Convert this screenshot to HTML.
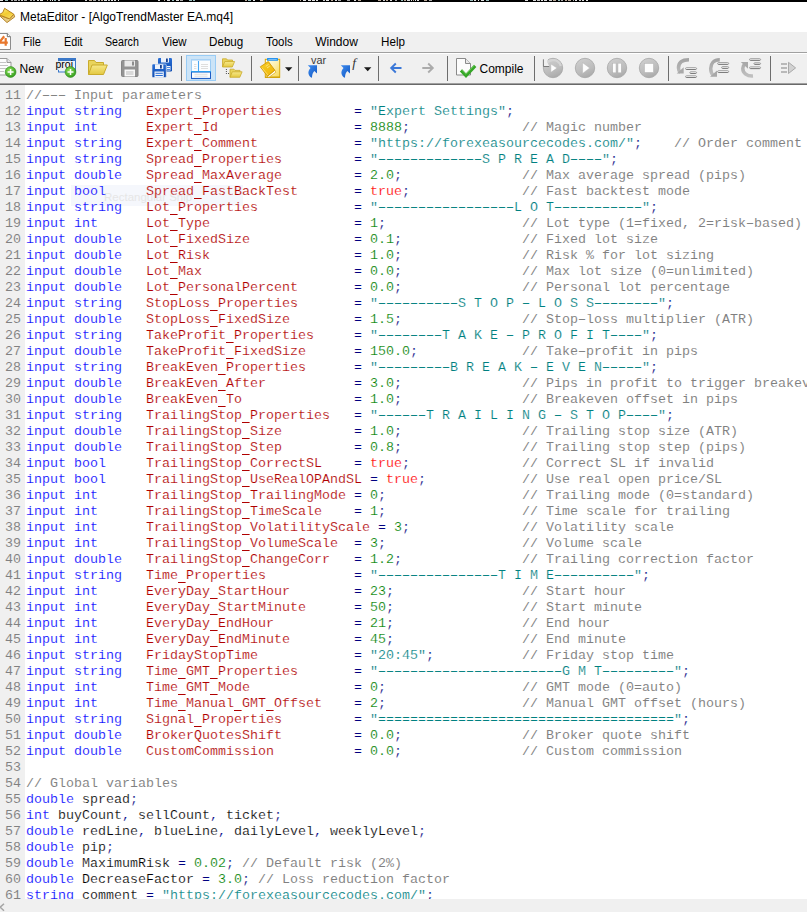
<!DOCTYPE html>
<html><head><meta charset="utf-8">
<style>
html,body{margin:0;padding:0;}
body{width:807px;height:912px;overflow:hidden;background:#fff;font-family:"Liberation Sans",sans-serif;position:relative;}
#top{position:absolute;left:0;top:0;width:807px;height:2px;background:#000;}
#top i{position:absolute;top:0;height:1px;}
#title{position:absolute;left:0;top:2px;width:807px;height:30px;background:#fff;}
#title .txt{position:absolute;left:20px;top:7px;font-size:12px;line-height:16px;color:#000;white-space:nowrap;}
#menu{position:absolute;left:0;top:32px;width:807px;height:20px;background:#f0f0f0;}
#menu span{position:absolute;transform-origin:0 0;top:2px;font-size:12px;line-height:16px;color:#000;white-space:nowrap;}
#msep1{position:absolute;left:0;top:52px;width:807px;height:1px;background:#a0a0a0;}
#msep2{position:absolute;left:0;top:53px;width:807px;height:1px;background:#fff;}
#tb{position:absolute;left:0;top:54px;width:807px;height:29px;background:#f0f0f0;}
#tbb1{position:absolute;left:0;top:83px;width:807px;height:1px;background:#a0a0a0;}
#tbb2{position:absolute;left:0;top:84px;width:807px;height:1px;background:#696969;}
#code{position:absolute;left:0;top:85px;width:807px;height:814px;background:#fff;overflow:hidden;}
#gutter{position:absolute;left:0;top:0;width:25px;height:814px;background:#f0f0f0;}
#ghost{position:absolute;left:71px;top:100px;width:172px;height:21px;background:#f5f7fc;}
#ghost span{position:absolute;left:33px;top:4px;font-size:11.5px;line-height:16px;color:#e6e6e6;white-space:nowrap;}
#lines{position:absolute;left:26px;top:3px;font-family:"Liberation Mono",monospace;font-size:13.333px;line-height:16px;color:#000;white-space:pre;-webkit-text-stroke:0.18px #fff;}
.ln{height:16px;position:relative;}
.no{position:absolute;left:-21px;top:0;color:#808080;-webkit-text-stroke:0.06px #f0f0f0;}
u{display:inline-block;width:8px;height:16px;vertical-align:top;text-decoration:none;background:linear-gradient(currentColor,currentColor) no-repeat 0 14px/7.6px 1px;}
#lines b{font-weight:normal;-webkit-text-stroke:0.25px currentColor;}
.b{color:#0000ff;}
.v{color:#b00000;}
.s{color:#008080;}
.n{color:#008000;}
.k{color:#ff0000;}
.c{color:#808080;-webkit-text-stroke:0.06px #fff;}
.o{color:#000080;}
#hs{position:absolute;left:0;top:899px;width:807px;height:13px;background:#f0f0f0;}
</style></head><body>
<div id="top"><i style="left:0px;width:3px;background:#e4e4e4"></i><i style="left:5px;width:3px;background:#9bb"></i><i style="left:11px;width:2px;background:#aaa"></i><i style="left:14px;width:3px;background:#aaa"></i><i style="left:18px;width:2px;background:#aaa"></i><i style="left:21px;width:2px;background:#ccc"></i><i style="left:24px;width:3px;background:#aaa"></i><i style="left:30px;width:2px;background:#aaa"></i><i style="left:33px;width:2px;background:#aaa"></i><i style="left:37px;width:2px;background:#ddd"></i><i style="left:40px;width:3px;background:#e4e4e4"></i><i style="left:47px;width:1px;background:#ba9"></i><i style="left:50px;width:1px;background:#ddd"></i><i style="left:52px;width:1px;background:#e4e4e4"></i><i style="left:54px;width:2px;background:#9bb"></i><i style="left:58px;width:2px;background:#ccc"></i><i style="left:85px;width:2px;background:#ccc"></i><i style="left:89px;width:3px;background:#ba9"></i><i style="left:93px;width:3px;background:#aaa"></i><i style="left:98px;width:2px;background:#aaa"></i><i style="left:101px;width:2px;background:#ba9"></i><i style="left:104px;width:3px;background:#ddd"></i><i style="left:108px;width:2px;background:#ccc"></i><i style="left:111px;width:2px;background:#e4e4e4"></i><i style="left:114px;width:2px;background:#ddd"></i><i style="left:118px;width:1px;background:#e4e4e4"></i><i style="left:158px;width:2px;background:#ddd"></i><i style="left:164px;width:1px;background:#ba9"></i><i style="left:167px;width:3px;background:#ddd"></i><i style="left:172px;width:2px;background:#9bb"></i><i style="left:176px;width:3px;background:#ddd"></i><i style="left:180px;width:3px;background:#aaa"></i><i style="left:189px;width:3px;background:#9bb"></i><i style="left:193px;width:2px;background:#9bb"></i><i style="left:245px;width:2px;background:#ba9"></i><i style="left:248px;width:3px;background:#9bb"></i><i style="left:253px;width:2px;background:#e4e4e4"></i><i style="left:260px;width:3px;background:#ba9"></i><i style="left:300px;width:1px;background:#ba9"></i><i style="left:303px;width:3px;background:#e4e4e4"></i><i style="left:308px;width:3px;background:#e4e4e4"></i><i style="left:312px;width:3px;background:#e4e4e4"></i><i style="left:316px;width:2px;background:#ddd"></i><i style="left:323px;width:2px;background:#ccc"></i><i style="left:326px;width:3px;background:#e4e4e4"></i><i style="left:331px;width:2px;background:#ba9"></i><i style="left:335px;width:2px;background:#ddd"></i><i style="left:338px;width:3px;background:#aaa"></i><i style="left:347px;width:3px;background:#aaa"></i><i style="left:354px;width:2px;background:#ddd"></i><i style="left:358px;width:3px;background:#ba9"></i><i style="left:378px;width:3px;background:#ba9"></i><i style="left:383px;width:2px;background:#ccc"></i><i style="left:386px;width:2px;background:#ba9"></i><i style="left:390px;width:2px;background:#ddd"></i><i style="left:395px;width:2px;background:#aaa"></i><i style="left:401px;width:2px;background:#9bb"></i><i style="left:404px;width:2px;background:#ba9"></i><i style="left:407px;width:3px;background:#ddd"></i><i style="left:411px;width:1px;background:#e4e4e4"></i><i style="left:413px;width:1px;background:#ba9"></i><i style="left:415px;width:1px;background:#e4e4e4"></i><i style="left:417px;width:2px;background:#e4e4e4"></i><i style="left:424px;width:3px;background:#ba9"></i><i style="left:429px;width:3px;background:#aaa"></i><i style="left:470px;width:3px;background:#9bb"></i><i style="left:474px;width:2px;background:#e4e4e4"></i><i style="left:478px;width:1px;background:#e4e4e4"></i><i style="left:481px;width:3px;background:#e4e4e4"></i><i style="left:486px;width:3px;background:#9bb"></i><i style="left:525px;width:3px;background:#ddd"></i><i style="left:533px;width:3px;background:#ddd"></i><i style="left:537px;width:3px;background:#ccc"></i><i style="left:541px;width:2px;background:#e4e4e4"></i><i style="left:544px;width:3px;background:#ddd"></i><i style="left:549px;width:3px;background:#ccc"></i><i style="left:553px;width:3px;background:#ba9"></i><i style="left:558px;width:2px;background:#9bb"></i><i style="left:561px;width:2px;background:#aaa"></i><i style="left:565px;width:2px;background:#ba9"></i><i style="left:568px;width:3px;background:#ba9"></i><i style="left:573px;width:1px;background:#aaa"></i><i style="left:575px;width:2px;background:#e4e4e4"></i><i style="left:579px;width:2px;background:#ccc"></i><i style="left:582px;width:2px;background:#ddd"></i><i style="left:586px;width:2px;background:#e4e4e4"></i></div>
<div id="title"><svg width="20" height="30" viewBox="0 2 20 30" style="position:absolute;left:0;top:0"><defs><linearGradient id="tb1" x1="0.2" y1="0" x2="0.8" y2="1"><stop offset="0" stop-color="#fbea7c"/><stop offset="0.5" stop-color="#f2cb30"/><stop offset="1" stop-color="#f6dc68"/></linearGradient></defs>
<path d="M-1 15.2 L7 22.6 L14.7 16.9 L13.8 14.2 L9.5 18.8 Z" fill="#e6cb80" stroke="#b07a1c" stroke-width="0.9"/>
<path d="M4.6 8.3 L13.8 14.2 L9.6 18.9 L-1 14.8 L2.8 12.5 Z" fill="url(#tb1)" stroke="#b8821e" stroke-width="1"/>
</svg><span class="txt">MetaEditor - [AlgoTrendMaster EA.mq4]</span></div>
<div id="menu"><svg width="14" height="20" viewBox="0 32 14 20" style="position:absolute;left:0;top:0">
<path d="M-2 33.5 H7.3 L10.5 36.7 V49.5 H-2 Z" fill="#fff" stroke="#8c8c8c" stroke-width="1"/>
<path d="M7.3 33.5 V36.7 H10.5" fill="#fff" stroke="#6c6c6c" stroke-width="1"/>
<path d="M4.2 36.3 L-0.8 42.6 H7.8 M5.7 38 V45.8" stroke="#e8782e" stroke-width="2.2" fill="none"/>
</svg>
<span style="left:23.4px;transform:scaleX(0.92)">File</span><span style="left:63.6px;transform:scaleX(0.9)">Edit</span><span style="left:105.2px;transform:scaleX(0.89)">Search</span><span style="left:162px;transform:scaleX(0.95)">View</span><span style="left:209.4px;transform:scaleX(0.97)">Debug</span><span style="left:266.2px;transform:scaleX(0.95)">Tools</span><span style="left:315.2px;transform:scaleX(1.0)">Window</span><span style="left:381.2px;transform:scaleX(0.97)">Help</span>
</div>
<div id="msep1"></div><div id="msep2"></div>
<div id="tb"><svg width="807" height="29" viewBox="0 54 807 29" style="position:absolute;left:0;top:0;font-family:'Liberation Sans',sans-serif;">
<defs>
<linearGradient id="gy" x1="0" y1="0" x2="0" y2="1"><stop offset="0" stop-color="#f7e98a"/><stop offset="1" stop-color="#e3c840"/></linearGradient>
<radialGradient id="gg" cx="0.4" cy="0.35" r="0.7"><stop offset="0" stop-color="#8fe05a"/><stop offset="1" stop-color="#2f9a1c"/></radialGradient>
<linearGradient id="gb" x1="0" y1="0" x2="0" y2="1"><stop offset="0" stop-color="#2a6fd6"/><stop offset="1" stop-color="#0f4cb0"/></linearGradient>
<linearGradient id="gc" x1="0.3" y1="0" x2="0.7" y2="1"><stop offset="0" stop-color="#cecece"/><stop offset="0.6" stop-color="#bcbcbc"/><stop offset="1" stop-color="#a8a8a8"/></linearGradient>
<linearGradient id="ga" x1="0" y1="0" x2="1" y2="1"><stop offset="0" stop-color="#3f8cf0"/><stop offset="1" stop-color="#0f55c0"/></linearGradient>
<linearGradient id="gs" gradientUnits="userSpaceOnUse" x1="0" y1="58" x2="0" y2="78"><stop offset="0" stop-color="#a2a2a2"/><stop offset="1" stop-color="#c2c2c2"/></linearGradient>
<linearGradient id="gcl" x1="0" y1="0" x2="1" y2="1"><stop offset="0" stop-color="#fffdf0"/><stop offset="0.5" stop-color="#fdf0b0"/><stop offset="1" stop-color="#f7d84e"/></linearGradient><linearGradient id="gbk" x1="0" y1="0" x2="1" y2="1"><stop offset="0" stop-color="#f7cf2a"/><stop offset="1" stop-color="#eeb204"/></linearGradient>
</defs>
<!-- separators -->
<g fill="#6d6d6d">
<rect x="181" y="56" width="1" height="25"/><rect x="251" y="56" width="1" height="25"/><rect x="298" y="56" width="1" height="25"/><rect x="378" y="56" width="1" height="25"/><rect x="447" y="56" width="1" height="25"/><rect x="534" y="56" width="1" height="25"/><rect x="668" y="56" width="1" height="25"/><rect x="770" y="56" width="1" height="25"/>
</g>
<!-- New -->
<g>
<path d="M-3 58.5 H7 L11 62.5 V75 H-3 Z" fill="#fdfdfd" stroke="#9a9a9a" stroke-width="1"/>
<path d="M7 58.5 V62.5 H11" fill="#e6e6e6" stroke="#9a9a9a" stroke-width="1"/>
<path d="M0 62.5H6 M0 65.5H8 M0 68.5H6 M0 71.5H4" stroke="#c4c4c4" stroke-width="1"/>
<circle cx="10.6" cy="72" r="5.4" fill="url(#gg)" stroke="#2c8a1a" stroke-width="0.6"/>
<path d="M7.6 72H13.6 M10.6 69V75" stroke="#fff" stroke-width="1.5"/>
<text x="19.5" y="72.5" font-size="12" fill="#000">New</text>
</g>
<!-- proj -->
<g>
<rect x="58.5" y="58.5" width="17" height="13.5" fill="#eaf2fb" stroke="#3b78c8" stroke-width="1"/>
<rect x="58" y="58" width="18" height="3" fill="#3b78c8"/>
<rect x="55" y="61" width="17" height="9" fill="#f0f0f0" opacity="0.85"/>
<text x="55.5" y="68" font-size="10.5" fill="#000">proj</text>
<circle cx="70.5" cy="72" r="5.4" fill="url(#gg)" stroke="#2c8a1a" stroke-width="0.6"/>
<path d="M67.5 72H73.5 M70.5 69V75" stroke="#fff" stroke-width="1.5"/>
</g>
<!-- open folder -->
<g>
<path d="M88.5 74.5 V60.5 H94.5 L96 62.5 H103.5 V65" fill="#e9d45c" stroke="#c9ab2c" stroke-width="1"/>
<path d="M88.5 74.5 L92 65 H107.3 L103.5 74.5 Z" fill="url(#gy)" stroke="#c9ab2c" stroke-width="1"/>
</g>
<!-- save (gray) -->
<g>
<path d="M121.5 61.5 Q121.5 60.5 122.5 60.5 H137 Q138 60.5 138 61.5 V75.5 Q138 76.5 137 76.5 H122.5 Q121.5 76.5 121.5 75.5 Z" fill="#939393" stroke="#858585" stroke-width="1"/>
<rect x="124.5" y="60.5" width="10.5" height="6" fill="#e9e9e9"/>
<rect x="132" y="61.5" width="2" height="4" fill="#8d8d8d"/>
<rect x="124.5" y="69.5" width="10.5" height="7" fill="#f8f8f8"/>
<path d="M126 72H133.5 M126 74H133.5" stroke="#a9a9a9" stroke-width="0.8"/>
</g>
<!-- save all (blue) -->
<g>
<rect x="158" y="58" width="14" height="13.5" rx="1.2" fill="url(#gb)"/>
<rect x="161" y="58" width="8" height="4.5" fill="#eef3fb"/>
<rect x="166" y="58.5" width="1.8" height="3.5" fill="#1a3f8a"/>
<rect x="166.5" y="66" width="4" height="4.5" fill="#eef3fb"/>
<path d="M167 67.5H170 M167 69.5H170" stroke="#2a6fd6" stroke-width="0.8"/>
<rect x="152" y="64" width="14.3" height="13.5" rx="1.2" fill="url(#gb)" stroke="#f0f0f0" stroke-width="0.6"/>
<rect x="155" y="64.3" width="8.3" height="4.7" fill="#eef3fb"/>
<rect x="160" y="65" width="1.8" height="3.5" fill="#1a3f8a"/>
<rect x="154.5" y="71.5" width="9.3" height="6" fill="#eef3fb"/>
<path d="M155.5 73.3H162.8 M155.5 75.5H162.8" stroke="#2a6fd6" stroke-width="1"/>
</g>
<!-- active button -->
<rect x="186.5" y="55.5" width="29" height="25" fill="#cce4f7" stroke="#99ccf5" stroke-width="1"/>
<g>
<rect x="191.5" y="59.5" width="19" height="12" fill="#fbfdff" stroke="#9ccbf3" stroke-width="1"/>
<rect x="191" y="59" width="20" height="1.6" fill="#a9d2f5"/>
<path d="M198.5 61V71.5" stroke="#4aa6f2" stroke-width="1.1"/>
<path d="M194 64.5H196.5 M194 66.5H196.5 M194 68.5H196.5 M201 64.5H208 M201 66.5H208 M201 68.5H208" stroke="#dedede" stroke-width="1"/>
<rect x="191.5" y="72" width="19" height="6.4" fill="#fbfdff" stroke="#1f5cc4" stroke-width="1"/><path d="M191 78.6H211" stroke="#1f5cc4" stroke-width="0.8"/>
<path d="M191 71.6H211" stroke="#2b9ff2" stroke-width="1.1"/>
<path d="M194.5 74.3H207.5 M194.5 76.2H207.5" stroke="#d8d8d8" stroke-width="0.8"/>
</g>
<!-- folder tree -->
<g>
<path d="M222.5 67 V58.8 H226.5 L227.5 60 H232.5 V62" fill="#e9d45c" stroke="#c9ab2c" stroke-width="0.8"/>
<path d="M222.5 67 L224.8 61.5 H234.6 L232.3 67 Z" fill="url(#gy)" stroke="#c9ab2c" stroke-width="0.8"/>
<path d="M230 77.3 V69.2 H234 L235 70.4 H240 V72.3" fill="#e9d45c" stroke="#c9ab2c" stroke-width="0.8"/>
<path d="M230 77.3 L232.3 71.8 H242.1 L239.8 77.3 Z" fill="url(#gy)" stroke="#c9ab2c" stroke-width="0.8"/>
<path d="M226.4 69V75" stroke="#505050" stroke-width="1" stroke-dasharray="1 1"/><rect x="228" y="73" width="1" height="1" fill="#505050"/>
</g>
<!-- book / clipboard -->
<g>
<rect x="265.3" y="59.3" width="14.4" height="18" fill="url(#gcl)" stroke="#d9a90a" stroke-width="1"/>
<path d="M265 77.2H280" stroke="#cf9f06" stroke-width="1.2"/>
<rect x="267" y="58" width="11" height="2.8" rx="0.6" fill="#1f8fee"/>
<path d="M268.3 59.4H276.8" stroke="#9fd2fa" stroke-width="0.8"/>
<path d="M267.6 76.3 L268.8 77.4 L275.8 72.3 L274.8 70.2 Z" fill="#fffdf2" stroke="#d6a413" stroke-width="0.7"/>
<path d="M260.3 66.8 L268.3 61.5 L274.8 70.2 L267.4 76.2 Z" fill="url(#gbk)" stroke="#d39a06" stroke-width="0.9"/>
<path d="M261.8 67.6 L268 75" stroke="#fbe27a" stroke-width="0.8"/>
<path d="M265.8 66.3 L268.6 64.4 M267 68 L269.8 66.1" stroke="#fbe58a" stroke-width="0.9"/>
</g>
<path d="M285 67.3 H292.4 L288.7 71.2 Z" fill="#1a1a1a"/>
<!-- var -->
<g>
<text x="311" y="63.8" font-size="10.8" fill="#3a3a3a">var</text>
<path d="M307.8 65.2 L317.0 65.2 L317.0 73.6 L314.3 70.9 C312.6 72.6 312.0 75 312.0 77.8 C308.5 76 306.8 72 310.5 67.9 Z" fill="url(#ga)"/>
</g>
<!-- f -->
<g>
<path d="M340.8 65.2 L350.0 65.2 L350.0 73.6 L347.3 70.9 C345.6 72.6 345.0 75 345.0 77.8 C341.5 76 339.8 72 343.5 67.9 Z" fill="url(#ga)"/>
<text x="352.2" y="67.2" font-size="13.5" font-style="italic" font-family="'Liberation Serif',serif" fill="#333">f</text>
</g>
<path d="M364 67.3 H371.4 L367.7 71.2 Z" fill="#1a1a1a"/>
<!-- back / forward -->
<path d="M401.5 68H391.5 M395.8 63.5 L391.2 68 L395.8 72.5" stroke="#3b78d8" stroke-width="1.9" fill="none"/>
<path d="M422.3 68H432.5 M428.2 63.5 L432.8 68 L428.2 72.5" stroke="#ababab" stroke-width="1.9" fill="none"/>
<!-- compile -->
<g>
<path d="M456.5 58.5 H465.5 L470.5 63.5 V75 H456.5 Z" fill="#fcfcfc" stroke="#8a8a8a" stroke-width="1"/>
<path d="M465.5 58.5 V63.5 H470.5" fill="#e8e8e8" stroke="#8a8a8a" stroke-width="1"/>
<path d="M461 70.4 L466 75.6 L475.2 65.8" stroke="#35a727" stroke-width="3.2" fill="none"/><path d="M461.6 69.8 L466 74.2 L474.4 65.2" stroke="#7fd46a" stroke-width="0.7" fill="none"/>
<text x="479.5" y="72.8" font-size="12" fill="#000">Compile</text>
</g>
<!-- debug circles -->
<g>
<circle cx="553" cy="68" r="9.7" fill="url(#gc)" stroke="#a6a6a6" stroke-width="0.8"/>
<path d="M546.5 63.5 A8 8 0 0 1 560.8 66" stroke="#d4d4d4" stroke-width="2.2" fill="none"/>
<path d="M550.9 64 L557 68.1 L550.9 72.3 Z" fill="#fdfdfd" stroke="#b0b0b0" stroke-width="0.4"/>
<path d="M544 58 H548.5 L547 62 L549.2 65.9 H544 Z" fill="#efefef"/><path d="M543.4 59.3 V66.5 H549.2" stroke="#7c7c7c" stroke-width="1" fill="none"/>
<circle cx="585" cy="68" r="9.7" fill="url(#gc)" stroke="#a6a6a6" stroke-width="0.8"/>
<path d="M582.6 62.7 L589.7 68 L582.6 73.4 Z" fill="#fdfdfd" stroke="#b0b0b0" stroke-width="0.4"/>
<circle cx="617" cy="68" r="9.7" fill="url(#gc)" stroke="#a6a6a6" stroke-width="0.8"/>
<rect x="612.8" y="63.2" width="3.2" height="9.6" fill="#fdfdfd" stroke="#b0b0b0" stroke-width="0.4"/><rect x="618" y="63.2" width="3.2" height="9.6" fill="#fdfdfd" stroke="#b0b0b0" stroke-width="0.4"/>
<circle cx="649" cy="68" r="9.7" fill="url(#gc)" stroke="#a6a6a6" stroke-width="0.8"/>
<rect x="644.6" y="63.6" width="8.8" height="8.8" fill="#fdfdfd" stroke="#b0b0b0" stroke-width="0.4"/>
</g>
<!-- step into -->
<g>
<path d="M689 59.8 C682 59.8 678.5 63 678.5 68 C678.5 70 679 71.5 680.3 72.6" stroke="url(#gs)" stroke-width="3.5" fill="none"/>
<path d="M676.7 73.6 H683.7 V67.2 Z" fill="#a9a9a9"/>
<rect x="685.5" y="67.7" width="11.1" height="1.8" rx="1.1" fill="#f6f6f6" stroke="#8a8a8a" stroke-width="0.8"/><path d="M686.3 69.5H695.8" stroke="#6e6e6e" stroke-width="0.7"/><rect x="689.8" y="71.8" width="6.8" height="1.7" rx="1.1" fill="#f6f6f6" stroke="#8a8a8a" stroke-width="0.8"/><path d="M690.6 73.5H695.8" stroke="#6e6e6e" stroke-width="0.7"/><rect x="685.5" y="75.8" width="11.1" height="1.7" rx="1.1" fill="#f6f6f6" stroke="#8a8a8a" stroke-width="0.8"/><path d="M686.3 77.5H695.8" stroke="#6e6e6e" stroke-width="0.7"/>
</g>
<!-- step over -->
<g>
<path d="M719.8 59.8 C713.5 59.8 710.7 64 710.7 68.5 C710.7 71.5 711.6 73.8 713.3 75.6" stroke="url(#gs)" stroke-width="3.5" fill="none"/>
<path d="M710 76.8 H717 V70.4 Z" fill="#a9a9a9"/>
<rect x="717.6" y="62.6" width="11.1" height="1.8" rx="1.1" fill="#f6f6f6" stroke="#8a8a8a" stroke-width="0.8"/><path d="M718.4 64.4H727.9" stroke="#6e6e6e" stroke-width="0.7"/><rect x="721.6" y="66.6" width="7.1" height="1.8" rx="1.1" fill="#f6f6f6" stroke="#8a8a8a" stroke-width="0.8"/><path d="M722.4 68.4H727.9" stroke="#6e6e6e" stroke-width="0.7"/><rect x="717.6" y="70.7" width="11.1" height="1.8" rx="1.1" fill="#f6f6f6" stroke="#8a8a8a" stroke-width="0.8"/><path d="M718.4 72.5H727.9" stroke="#6e6e6e" stroke-width="0.7"/>
</g>
<!-- step out -->
<g>
<path d="M753 76 C747 76.5 742.8 73 742.8 68.5 C742.8 66.5 743.5 65.2 744.9 64.2" stroke="url(#gs)" stroke-width="3.5" fill="none"/>
<path d="M740.8 61.9 H748 V68.7 Z" fill="#a9a9a9"/>
<rect x="749.5" y="58.7" width="11.1" height="1.7" rx="1.1" fill="#f6f6f6" stroke="#8a8a8a" stroke-width="0.8"/><path d="M750.3 60.4H759.8" stroke="#6e6e6e" stroke-width="0.7"/><rect x="753.9" y="62.8" width="6.7" height="1.6" rx="1.1" fill="#f6f6f6" stroke="#8a8a8a" stroke-width="0.8"/><path d="M754.7 64.4H759.8" stroke="#6e6e6e" stroke-width="0.7"/><rect x="749.5" y="66.9" width="11.1" height="1.7" rx="1.1" fill="#f6f6f6" stroke="#8a8a8a" stroke-width="0.8"/><path d="M750.3 68.6H759.8" stroke="#6e6e6e" stroke-width="0.7"/>
</g>
<!-- run to -->
<g>
<path d="M781 64H787 M781 68H787 M781 72H787" stroke="#a6a6a6" stroke-width="1.5"/>
<path d="M788.5 62.3 L795.6 67.9 L788.5 73.5 Z" fill="#d2d2d2" stroke="#a4a4a4" stroke-width="0.9"/>
</g>
</svg>
</div>
<div id="tbb1"></div><div id="tbb2"></div>
<div id="code"><div id="gutter"></div><div id="ghost"><span>Rectangular Snip</span></div><div id="lines"><div class="ln"><span class="no">11</span><span class="c">//<b>–––</b> Input parameters</span></div><div class="ln"><span class="no">12</span><span class="b">input</span> <span class="b">string</span>   <span class="v">Expert<u></u>Properties</span>         <span class="o">=</span> <span class="s">"Expert Settings"</span><span class="o">;</span></div><div class="ln"><span class="no">13</span><span class="b">input</span> <span class="b">int</span>      <span class="v">Expert<u></u>Id</span>                 <span class="o">=</span> <span class="n">8888</span><span class="o">;</span>              <span class="c">// Magic number</span></div><div class="ln"><span class="no">14</span><span class="b">input</span> <span class="b">string</span>   <span class="v">Expert<u></u>Comment</span>            <span class="o">=</span> <span class="s">"https://forexeasourcecodes.com/"</span><span class="o">;</span>    <span class="c">// Order comment</span></div><div class="ln"><span class="no">15</span><span class="b">input</span> <span class="b">string</span>   <span class="v">Spread<u></u>Properties</span>         <span class="o">=</span> <span class="s">"<b>–––––––––––––</b>S P R E A D<b>––––</b>"</span><span class="o">;</span></div><div class="ln"><span class="no">16</span><span class="b">input</span> <span class="b">double</span>   <span class="v">Spread<u></u>MaxAverage</span>         <span class="o">=</span> <span class="n">2.0</span><span class="o">;</span>               <span class="c">// Max average spread (pips)</span></div><div class="ln"><span class="no">17</span><span class="b">input</span> <span class="b">bool</span>     <span class="v">Spread<u></u>FastBackTest</span>       <span class="o">=</span> <span class="k">true</span><span class="o">;</span>              <span class="c">// Fast backtest mode</span></div><div class="ln"><span class="no">18</span><span class="b">input</span> <span class="b">string</span>   <span class="v">Lot<u></u>Properties</span>            <span class="o">=</span> <span class="s">"<b>–––––––––––––––––</b>L O T<b>–––––––––––</b>"</span><span class="o">;</span></div><div class="ln"><span class="no">19</span><span class="b">input</span> <span class="b">int</span>      <span class="v">Lot<u></u>Type</span>                  <span class="o">=</span> <span class="n">1</span><span class="o">;</span>                 <span class="c">// Lot type (1=fixed, 2=risk<b>–</b>based)</span></div><div class="ln"><span class="no">20</span><span class="b">input</span> <span class="b">double</span>   <span class="v">Lot<u></u>FixedSize</span>             <span class="o">=</span> <span class="n">0.1</span><span class="o">;</span>               <span class="c">// Fixed lot size</span></div><div class="ln"><span class="no">21</span><span class="b">input</span> <span class="b">double</span>   <span class="v">Lot<u></u>Risk</span>                  <span class="o">=</span> <span class="n">1.0</span><span class="o">;</span>               <span class="c">// Risk % for lot sizing</span></div><div class="ln"><span class="no">22</span><span class="b">input</span> <span class="b">double</span>   <span class="v">Lot<u></u>Max</span>                   <span class="o">=</span> <span class="n">0.0</span><span class="o">;</span>               <span class="c">// Max lot size (0=unlimited)</span></div><div class="ln"><span class="no">23</span><span class="b">input</span> <span class="b">double</span>   <span class="v">Lot<u></u>PersonalPercent</span>       <span class="o">=</span> <span class="n">0.0</span><span class="o">;</span>               <span class="c">// Personal lot percentage</span></div><div class="ln"><span class="no">24</span><span class="b">input</span> <span class="b">string</span>   <span class="v">StopLoss<u></u>Properties</span>       <span class="o">=</span> <span class="s">"<b>––––––––––</b>S T O P <b>–</b> L O S S<b>––––––––</b>"</span><span class="o">;</span></div><div class="ln"><span class="no">25</span><span class="b">input</span> <span class="b">double</span>   <span class="v">StopLoss<u></u>FixedSize</span>        <span class="o">=</span> <span class="n">1.5</span><span class="o">;</span>               <span class="c">// Stop<b>–</b>loss multiplier (ATR)</span></div><div class="ln"><span class="no">26</span><span class="b">input</span> <span class="b">string</span>   <span class="v">TakeProfit<u></u>Properties</span>     <span class="o">=</span> <span class="s">"<b>––––––––</b>T A K E <b>–</b> P R O F I T<b>––––</b>"</span><span class="o">;</span></div><div class="ln"><span class="no">27</span><span class="b">input</span> <span class="b">double</span>   <span class="v">TakeProfit<u></u>FixedSize</span>      <span class="o">=</span> <span class="n">150.0</span><span class="o">;</span>             <span class="c">// Take<b>–</b>profit in pips</span></div><div class="ln"><span class="no">28</span><span class="b">input</span> <span class="b">string</span>   <span class="v">BreakEven<u></u>Properties</span>      <span class="o">=</span> <span class="s">"<b>–––––––––</b>B R E A K <b>–</b> E V E N<b>–––––</b>"</span><span class="o">;</span></div><div class="ln"><span class="no">29</span><span class="b">input</span> <span class="b">double</span>   <span class="v">BreakEven<u></u>After</span>           <span class="o">=</span> <span class="n">3.0</span><span class="o">;</span>               <span class="c">// Pips in profit to trigger breakeven</span></div><div class="ln"><span class="no">30</span><span class="b">input</span> <span class="b">double</span>   <span class="v">BreakEven<u></u>To</span>              <span class="o">=</span> <span class="n">1.0</span><span class="o">;</span>               <span class="c">// Breakeven offset in pips</span></div><div class="ln"><span class="no">31</span><span class="b">input</span> <span class="b">string</span>   <span class="v">TrailingStop<u></u>Properties</span>   <span class="o">=</span> <span class="s">"<b>––––––</b>T R A I L I N G <b>–</b> S T O P<b>––––</b>"</span><span class="o">;</span></div><div class="ln"><span class="no">32</span><span class="b">input</span> <span class="b">double</span>   <span class="v">TrailingStop<u></u>Size</span>         <span class="o">=</span> <span class="n">1.0</span><span class="o">;</span>               <span class="c">// Trailing stop size (ATR)</span></div><div class="ln"><span class="no">33</span><span class="b">input</span> <span class="b">double</span>   <span class="v">TrailingStop<u></u>Step</span>         <span class="o">=</span> <span class="n">0.8</span><span class="o">;</span>               <span class="c">// Trailing stop step (pips)</span></div><div class="ln"><span class="no">34</span><span class="b">input</span> <span class="b">bool</span>     <span class="v">TrailingStop<u></u>CorrectSL</span>    <span class="o">=</span> <span class="k">true</span><span class="o">;</span>              <span class="c">// Correct SL if invalid</span></div><div class="ln"><span class="no">35</span><span class="b">input</span> <span class="b">bool</span>     <span class="v">TrailingStop<u></u>UseRealOPAndSL</span> <span class="o">=</span> <span class="k">true</span><span class="o">;</span>            <span class="c">// Use real open price/SL</span></div><div class="ln"><span class="no">36</span><span class="b">input</span> <span class="b">int</span>      <span class="v">TrailingStop<u></u>TrailingMode</span> <span class="o">=</span> <span class="n">0</span><span class="o">;</span>                 <span class="c">// Trailing mode (0=standard)</span></div><div class="ln"><span class="no">37</span><span class="b">input</span> <span class="b">int</span>      <span class="v">TrailingStop<u></u>TimeScale</span>    <span class="o">=</span> <span class="n">1</span><span class="o">;</span>                 <span class="c">// Time scale for trailing</span></div><div class="ln"><span class="no">38</span><span class="b">input</span> <span class="b">int</span>      <span class="v">TrailingStop<u></u>VolatilityScale</span> <span class="o">=</span> <span class="n">3</span><span class="o">;</span>              <span class="c">// Volatility scale</span></div><div class="ln"><span class="no">39</span><span class="b">input</span> <span class="b">int</span>      <span class="v">TrailingStop<u></u>VolumeScale</span>  <span class="o">=</span> <span class="n">3</span><span class="o">;</span>                 <span class="c">// Volume scale</span></div><div class="ln"><span class="no">40</span><span class="b">input</span> <span class="b">double</span>   <span class="v">TrailingStop<u></u>ChangeCorr</span>   <span class="o">=</span> <span class="n">1.2</span><span class="o">;</span>               <span class="c">// Trailing correction factor</span></div><div class="ln"><span class="no">41</span><span class="b">input</span> <span class="b">string</span>   <span class="v">Time<u></u>Properties</span>           <span class="o">=</span> <span class="s">"<b>–––––––––––––––</b>T I M E<b>––––––––––</b>"</span><span class="o">;</span></div><div class="ln"><span class="no">42</span><span class="b">input</span> <span class="b">int</span>      <span class="v">EveryDay<u></u>StartHour</span>        <span class="o">=</span> <span class="n">23</span><span class="o">;</span>                <span class="c">// Start hour</span></div><div class="ln"><span class="no">43</span><span class="b">input</span> <span class="b">int</span>      <span class="v">EveryDay<u></u>StartMinute</span>      <span class="o">=</span> <span class="n">50</span><span class="o">;</span>                <span class="c">// Start minute</span></div><div class="ln"><span class="no">44</span><span class="b">input</span> <span class="b">int</span>      <span class="v">EveryDay<u></u>EndHour</span>          <span class="o">=</span> <span class="n">21</span><span class="o">;</span>                <span class="c">// End hour</span></div><div class="ln"><span class="no">45</span><span class="b">input</span> <span class="b">int</span>      <span class="v">EveryDay<u></u>EndMinute</span>        <span class="o">=</span> <span class="n">45</span><span class="o">;</span>                <span class="c">// End minute</span></div><div class="ln"><span class="no">46</span><span class="b">input</span> <span class="b">string</span>   <span class="v">FridayStopTime</span>            <span class="o">=</span> <span class="s">"20:45"</span><span class="o">;</span>           <span class="c">// Friday stop time</span></div><div class="ln"><span class="no">47</span><span class="b">input</span> <span class="b">string</span>   <span class="v">Time<u></u>GMT<u></u>Properties</span>       <span class="o">=</span> <span class="s">"<b>–––––––––––––––––––––––</b>G M T<b>–––––––––</b>"</span><span class="o">;</span></div><div class="ln"><span class="no">48</span><span class="b">input</span> <span class="b">int</span>      <span class="v">Time<u></u>GMT<u></u>Mode</span>             <span class="o">=</span> <span class="n">0</span><span class="o">;</span>                 <span class="c">// GMT mode (0=auto)</span></div><div class="ln"><span class="no">49</span><span class="b">input</span> <span class="b">int</span>      <span class="v">Time<u></u>Manual<u></u>GMT<u></u>Offset</span>    <span class="o">=</span> <span class="n">2</span><span class="o">;</span>                 <span class="c">// Manual GMT offset (hours)</span></div><div class="ln"><span class="no">50</span><span class="b">input</span> <span class="b">string</span>   <span class="v">Signal<u></u>Properties</span>         <span class="o">=</span> <span class="s">"====================================="</span><span class="o">;</span></div><div class="ln"><span class="no">51</span><span class="b">input</span> <span class="b">double</span>   <span class="v">BrokerQuotesShift</span>         <span class="o">=</span> <span class="n">0.0</span><span class="o">;</span>               <span class="c">// Broker quote shift</span></div><div class="ln"><span class="no">52</span><span class="b">input</span> <span class="b">double</span>   <span class="v">CustomCommission</span>          <span class="o">=</span> <span class="n">0.0</span><span class="o">;</span>               <span class="c">// Custom commission</span></div><div class="ln"><span class="no">53</span></div><div class="ln"><span class="no">54</span><span class="c">// Global variables</span></div><div class="ln"><span class="no">55</span><span class="b">double</span> spread<span class="o">;</span></div><div class="ln"><span class="no">56</span><span class="b">int</span> buyCount<span class="o">,</span> sellCount<span class="o">,</span> ticket<span class="o">;</span></div><div class="ln"><span class="no">57</span><span class="b">double</span> redLine<span class="o">,</span> blueLine<span class="o">,</span> dailyLevel<span class="o">,</span> weeklyLevel<span class="o">;</span></div><div class="ln"><span class="no">58</span><span class="b">double</span> pip<span class="o">;</span></div><div class="ln"><span class="no">59</span><span class="b">double</span> MaximumRisk <span class="o">=</span> <span class="n">0.02</span><span class="o">;</span> <span class="c">// Default risk (2%)</span></div><div class="ln"><span class="no">60</span><span class="b">double</span> DecreaseFactor <span class="o">=</span> <span class="n">3.0</span><span class="o">;</span> <span class="c">// Loss reduction factor</span></div><div class="ln"><span class="no">61</span><span class="b">string</span> comment <span class="o">=</span> <span class="s">"https://forexeasourcecodes.com/"</span><span class="o">;</span></div></div></div>
<div id="hs"><svg width="10" height="13" viewBox="0 899 10 13" style="position:absolute;left:0;top:0"><path d="M4 903.7 L0.2 907.2 L4 910.8" stroke="#a6a6a6" stroke-width="1.5" fill="none"/></svg></div>
</body></html>
